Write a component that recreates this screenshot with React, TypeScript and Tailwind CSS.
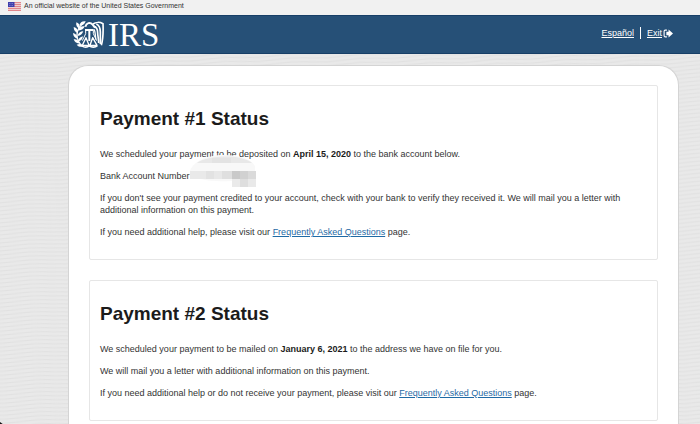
import React from "react";

interface PaymentCardProps {
  title: string;
  children: React.ReactNode;
}

const FlagIcon: React.FC = () => (
  <svg viewBox="0 0 26 18" className="h-[9px] w-[13px]" aria-hidden="true">
    <rect width="26" height="18" fill="#f0cfd1" />
    {[0, 4, 8, 12, 16].map((y) => (
      <rect key={y} y={y} width="26" height="2" fill="#e0868b" />
    ))}
    <rect width="13" height="10" fill="#3f3fae" />
    <g fill="#b9bbe6">
      <circle cx="3" cy="3" r="0.8" />
      <circle cx="6" cy="3" r="0.8" />
      <circle cx="9" cy="3" r="0.8" />
      <circle cx="3" cy="7" r="0.8" />
      <circle cx="6" cy="7" r="0.8" />
      <circle cx="9" cy="7" r="0.8" />
    </g>
  </svg>
);

// Eagle, scales and olive branch
const EagleLogo: React.FC = () => (
  <svg viewBox="0 0 93 84" className="h-7 w-[31px]" fill="none" stroke="#fff" aria-hidden="true">
    {/* olive branch */}
    <path d="M33 6C19 15 12 29 12 43s6 24 17 34" strokeWidth="4" />
    <g fill="#fff" stroke="none">
      <path d="M38 1c-9-2-17 3-19 12 10 1 16-4 19-12Z" />
      <path d="M10 4c-2 10 2 16 10 19 2-9-1-16-10-19Z" />
      <path d="M35 16c-10-2-17 3-20 12 10 1 17-4 20-12Z" />
      <path d="M2 18c0 10 5 16 13 18 1-10-4-16-13-18Z" />
      <path d="M31 31c-9 0-15 5-18 14 10-1 15-6 18-14Z" />
      <path d="M0 36c1 10 5 15 14 17-1-10-6-15-14-17Z" />
      <path d="M30 46c-9 2-14 7-15 16 9-2 14-8 15-16Z" />
      <path d="M2 55c3 9 9 13 18 12-3-9-9-13-18-12Z" />
      <path d="M11 71c6 7 13 8 21 5-5-7-12-9-21-5Z" />
    </g>
    {/* head and wing */}
    <path d="M37 17C40 6 51 2 59 11l7 9" strokeWidth="6" />
    <path d="M60 9C68 3 81 3 90 8c1 22 1 44-5 65" strokeWidth="5" />
    <path d="M63 16c8 2 11 9 11 20 0 9 3 16 3 30" strokeWidth="5" />
    <path d="M70 9c9 4 12 11 12 24v36" strokeWidth="5" />
    <path d="M63 25c5 6 3 19 6 31" strokeWidth="4" />
    {/* scales */}
    <path d="M36 27h26M49 25v35" strokeWidth="6" />
    <path d="M38 29v9c-3 8-7 14-10 21M61 29v9c3 8 7 14 10 21" strokeWidth="3" />
    <path d="M39 50 28 73h20ZM59 50 51 73h21Z" strokeWidth="4" strokeLinejoin="round" />
    <path d="M28 74c5 6 15 6 21 0 6 6 18 6 24 0" strokeWidth="5" />
  </svg>
);

const ExitIcon: React.FC = () => (
  <svg viewBox="0 0 18 16" className="ml-px h-[9px] w-[10px]" aria-hidden="true">
    <path d="M7 2H4C2.600 2 2 3 2 4v8c0 1 .6 2 2 2h3" fill="none" stroke="#fff" strokeWidth="2" />
    <path d="M6 5h4V1l8 7-8 7v-4H6Z" fill="#fff" />
  </svg>
);

const WaveBackground: React.FC = () => (
  <svg className="absolute inset-0 -z-10 h-full w-full" aria-hidden="true">
    <defs>
      <pattern id="waves" width="68" height="4" patternUnits="userSpaceOnUse" patternTransform="rotate(-3)">
        <rect width="68" height="4" fill="#e9e9e9" />
        <path d="M0 2Q17 0 34 2t34 0" fill="none" stroke="#e1e1e1" strokeWidth="1" />
      </pattern>
    </defs>
    <rect width="100%" height="100%" fill="url(#waves)" />
  </svg>
);

// Pixelated patch that hides the account number
const RedactedNumber: React.FC = () => (
  <svg viewBox="0 0 70 36" className="absolute -top-4 left-[88px] h-9 w-[70px]" aria-label="Hidden account number">
    <path d="M2 17C5 8 18 1 36 1c16 0 27 4 31 11v15H44c-20 1-40-1-42-10Z" fill="#f8f8f8" />
    <path d="M9 9C18 2 51-1 64 9Z" fill="#e8e8e8" />
    <path d="M24 4h19v5H24Z" fill="#e3e3e3" />
    <rect x="2" y="17" width="16" height="8" fill="#e9e9e9" />
    <rect x="18" y="17" width="8" height="8" fill="#e2e2e2" />
    <rect x="26" y="17" width="8" height="8" fill="#e8e8e8" />
    <rect x="34" y="17" width="10" height="8" fill="#dfdfdf" />
    <rect x="44" y="17" width="8" height="8" fill="#c9c9c9" />
    <rect x="52" y="17" width="8" height="8" fill="#d1d1d1" />
    <rect x="60" y="17" width="8" height="8" fill="#dadada" />
    <rect x="44" y="25" width="8" height="8" fill="#eaeaea" />
    <rect x="52" y="25" width="8" height="8" fill="#dedede" />
    <rect x="60" y="25" width="8" height="8" fill="#e9e9e9" />
  </svg>
);

const FaqLink: React.FC = () => (
  <a href="#faq" className="text-[#1f6aa5] underline">
    Frequently Asked Questions
  </a>
);

const PaymentCard: React.FC<PaymentCardProps> = ({ title, children }) => (
  <section className="rounded-xs border border-[#e6e6e6] px-2.5 py-[21px]">
    <h2 className="text-[19px] leading-6 font-bold text-[#1b1b1b]">{title}</h2>
    <div className="mt-[17px] space-y-2.5 text-[9px] leading-3 text-[#333]">{children}</div>
  </section>
);

const App: React.FC = () => {
  return (
    <div className="relative isolate flex min-h-screen flex-col font-['Liberation_Sans',Arial,sans-serif]">
      <WaveBackground />
      <div className="flex h-[15px] items-center gap-[3px] bg-[#f1f1f1] px-2 pb-[3px]">
        <FlagIcon />
        <p className="text-[7px] leading-3 text-[#333]">An official website of the United States Government</p>
      </div>

      <header className="flex h-[39px] items-center justify-between border-y border-[#173f67] bg-[#265077] pr-[27px] pl-[73px]">
        <a href="#home" className="flex items-center gap-1 text-white" aria-label="IRS">
          <EagleLogo />
          <span className="font-['Liberation_Serif',serif] text-[33px] leading-9">IRS</span>
        </a>
        <nav className="flex items-center pb-[3px] text-[9px] leading-3 text-white">
          <a href="#es" className="underline">Español</a>
          <span className="mx-1.5 h-3 w-px bg-white"></span>
          <a href="#exit" className="flex items-center underline">
            Exit
            <ExitIcon />
          </a>
        </nav>
      </header>

      <main className="mt-[11px] mr-[21px] ml-[68px] flex-1 space-y-5 rounded-t-[20px] border border-b-0 border-[#d4d4d4] bg-white px-5 pt-[19px] pb-1">
        <PaymentCard title="Payment #1 Status">
          <p>
            We scheduled your payment to be deposited on <b className="text-[#1b1b1b]">April 15, 2020</b> to the bank account below.
          </p>
          <div className="relative">
            <p>Bank Account Number</p>
            <RedactedNumber />
          </div>
          <p>
            If you don't see your payment credited to your account, check with your bank to verify they received it. We will mail you a letter with additional information on this payment.
          </p>
          <p>
            If you need additional help, please visit our <FaqLink /> page.
          </p>
        </PaymentCard>

        <PaymentCard title="Payment #2 Status">
          <p>
            We scheduled your payment to be mailed on <b className="text-[#1b1b1b]">January 6, 2021</b> to the address we have on file for you.
          </p>
          <p>We will mail you a letter with additional information on this payment.</p>
          <p>
            If you need additional help or do not receive your payment, please visit our <FaqLink /> page.
          </p>
        </PaymentCard>
      </main>

      <svg viewBox="0 0 4 3" className="absolute bottom-0 left-0 h-[3px] w-1" aria-hidden="true">
        <path d="M0 0 4 3H0Z" fill="#111" />
      </svg>
    </div>
  );
};

export default App;
